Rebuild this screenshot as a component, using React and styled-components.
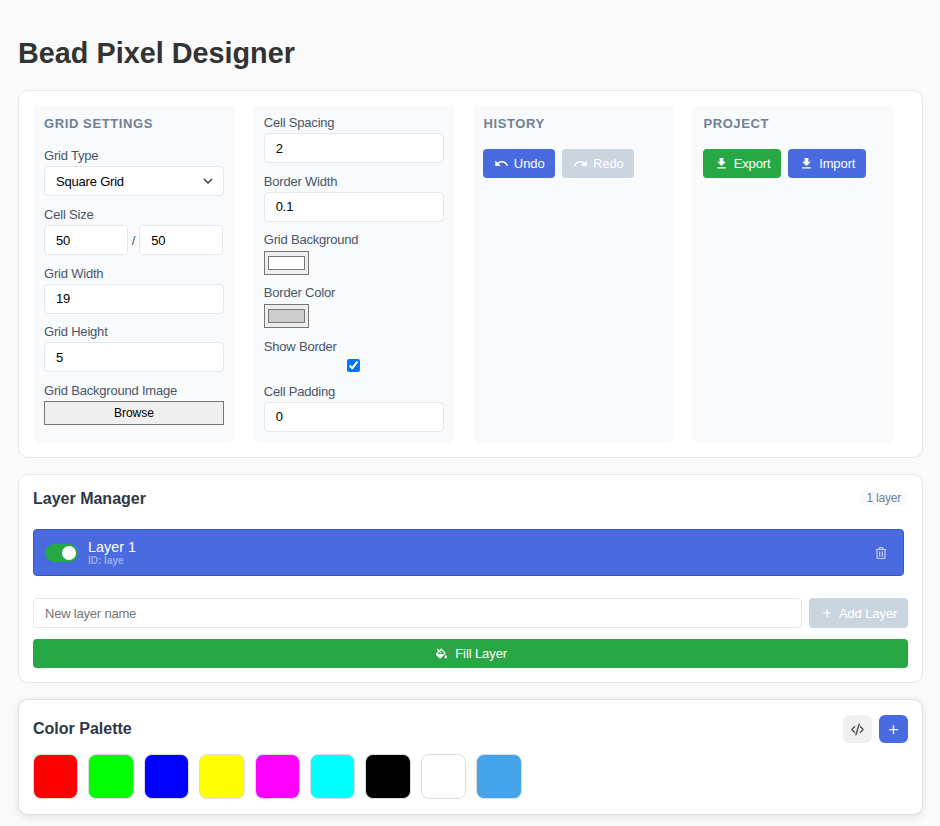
import React from 'react'
import styled, { createGlobalStyle } from 'styled-components'
import { MdUndo, MdRedo, MdFileDownload, MdAdd } from 'react-icons/md'
import { FaFillDrip, FaRegTrashAlt } from 'react-icons/fa'
import { BsCodeSlash } from 'react-icons/bs'

const GlobalStyle = createGlobalStyle`
  * { box-sizing: border-box; }
  body {
    margin: 0;
    background: #fafafa;
    color: #333;
    font-family: "Liberation Sans", Arial, sans-serif;
  }
`

const Page = styled.div`
  padding: 37px 17px 11px 18px;
  display: flex;
  flex-direction: column;
  gap: 16px;
`

const Title = styled.h1`
  margin: 0 0 4px;
  font-size: 28.8px;
  line-height: 33px;
  font-weight: 700;
  color: #333;
`

const Card = styled.section`
  background: #fff;
  border: 1px solid #e2e8f0;
  border-radius: 10px;
  padding: 14px;
`

const PaletteCard = styled(Card)`
  padding: 15px 14px;
  border-color: #e0e0e0;
  box-shadow: 0 2px 8px rgba(0, 0, 0, 0.1);
`

const SettingsGrid = styled.div`
  display: grid;
  grid-template-columns: repeat(4, 201.8px);
  column-gap: 18px;
`

const Panel = styled.div`
  background: #f8fafc;
  border-radius: 6px;
  padding: 10px 11px 0;
  height: 338px;
  display: flex;
  flex-direction: column;
`

const PanelTitle = styled.h3`
  margin: 0 0 15.4px;
  font-size: 13px;
  line-height: 18px;
  font-weight: 700;
  letter-spacing: 0.6px;
  text-transform: uppercase;
  color: #718096;
`

const Field = styled.div`
  display: flex;
  flex-direction: column;
  margin-bottom: 10.67px;
`

const Label = styled.label`
  font-size: 13px;
  letter-spacing: -0.2px;
  line-height: 16px;
  margin-bottom: 2px;
  color: #4a5568;
`

const TextInput = styled.input`
  width: 100%;
  height: 30px;
  padding: 0 11px;
  border: 1px solid #e2e8f0;
  border-radius: 4px;
  background: #fff;
  color: #000;
  font-family: inherit;
  font-size: 13px;
  letter-spacing: -0.2px;
  outline: none;
  &::placeholder { color: #757575; }
`

const Select = styled.select`
  width: 100%;
  height: 30px;
  padding: 0 11px;
  border: 1px solid #e2e8f0;
  border-radius: 4px;
  appearance: none;
  background: #fff url("data:image/svg+xml,%3Csvg xmlns='http://www.w3.org/2000/svg' width='10' height='6'%3E%3Cpath d='M1 1l4 4 4-4' fill='none' stroke='%23333' stroke-width='1.4'/%3E%3C/svg%3E") no-repeat right 10px center;
  color: #000;
  font-family: inherit;
  font-size: 13px;
  letter-spacing: -0.2px;
`

const SizeRow = styled.div`
  display: flex;
  align-items: center;
  gap: 4px;
  width: 179px;
  font-size: 13px;
  color: #4a5568;
`

const ColorInput = styled.input`
  display: block;
  width: 45px;
  height: 24px;
  margin-top: 0.5px;
  padding: 4px 3px;
  border: 1px solid #767676;
  background: #efefef;
  &::-webkit-color-swatch-wrapper { padding: 0; }
`

const Check = styled.input`
  display: block;
  width: 13px;
  height: 13px;
  margin: 2.33px auto 1px;
`

const BrowseButton = styled.button`
  width: 100%;
  height: 24px;
  padding: 0;
  background: #efefef;
  border: 1px solid #767676;
  border-radius: 0;
  color: #000;
  font-family: inherit;
  font-size: 12px;
`

const ButtonRow = styled.div`
  display: flex;
  gap: 7px;
  margin: 0.6px 0 0 -0.5px;
`

const ActionButton = styled.button`
  display: inline-flex;
  align-items: center;
  justify-content: center;
  gap: 5px;
  height: 29px;
  padding: 0 10.75px;
  border: none;
  border-radius: 4px;
  color: #fff;
  background: ${(p) =>
    p.$variant === 'green'
      ? '#28a745'
      : p.$variant === 'muted'
        ? '#cbd5e0'
        : '#4a6be0'};
  font-family: inherit;
  font-size: 13px;
  letter-spacing: -0.1px;
  white-space: nowrap;
`

const CardHeader = styled.div`
  display: flex;
  align-items: center;
  justify-content: space-between;
  height: ${(p) => p.$height}px;
  margin-bottom: ${(p) => p.$gap}px;
`

const CardTitle = styled.h2`
  margin: 0;
  font-size: 16px;
  font-weight: 700;
  color: #2d3748;
`

const Badge = styled.span`
  padding: 0 7px;
  height: 15px;
  line-height: 15px;
  font-size: 12px;
  letter-spacing: -0.2px;
  color: #718096;
  background: #f8fafc;
  border-radius: 8px;
`

const LayerRow = styled.div`
  width: 871px;
  height: 47px;
  display: flex;
  align-items: center;
  padding: 0 16px 0 11px;
  background: #4a6be0;
  border: 1px solid #3a56b8;
  border-radius: 4px;
  margin-bottom: 22px;
`

const Toggle = styled.span`
  position: relative;
  display: block;
  flex: none;
  width: 33px;
  height: 18px;
  margin-right: 10px;
  border-radius: 9px;
  background: #28a745;
  &::after {
    content: '';
    position: absolute;
    top: 2px;
    right: 2px;
    width: 14px;
    height: 14px;
    border-radius: 50%;
    background: #fff;
  }
`

const LayerInfo = styled.div`
  flex: 1;
  display: flex;
  flex-direction: column;
`

const LayerName = styled.span`
  font-size: 14.4px;
  line-height: 16px;
  color: #fff;
`

const LayerId = styled.span`
  font-size: 10px;
  line-height: 12px;
  font-weight: 700;
  color: rgba(255, 255, 255, 0.45);
`

const TrashIcon = styled(FaRegTrashAlt)`
  font-size: 12px;
  color: rgba(255, 255, 255, 0.7);
`

const AddRow = styled.div`
  display: flex;
  gap: 7px;
  margin-bottom: 11px;
`

const AddButton = styled(ActionButton)`
  flex: none;
  width: 99px;
  height: 30px;
`

const FillButton = styled(ActionButton)`
  width: 100%;
  gap: 8px;
  padding-left: 13px;
`

const IconButtons = styled.div`
  display: flex;
  gap: 7px;
`

const IconButton = styled.button`
  display: flex;
  align-items: center;
  justify-content: center;
  width: 29px;
  height: 28px;
  padding: 0;
  border: none;
  border-radius: 6px;
  color: ${(p) => (p.$primary ? '#fff' : '#333')};
  background: ${(p) => (p.$primary ? '#4a6be0' : '#f0f0f0')};
`

const Swatches = styled.div`
  display: flex;
  gap: 10px;
`

const Swatch = styled.div`
  width: 45.4px;
  height: 45.4px;
  border: 1px solid #ddd;
  border-radius: 8px;
  background: ${(p) => p.$color};
`

const palette = ['#ff0000', '#00ff00', '#0000ff', '#ffff00', '#ff00ff', '#00ffff', '#000000', '#ffffff', '#45a3ec']

const App = () => {
  return (
    <Page>
      <GlobalStyle />
      <Title>Bead Pixel Designer</Title>

      <Card>
        <SettingsGrid>
          <Panel>
            <PanelTitle>Grid Settings</PanelTitle>
            <Field>
              <Label>Grid Type</Label>
              <Select defaultValue='square'>
                <option value='square'>Square Grid</option>
              </Select>
            </Field>
            <Field>
              <Label>Cell Size</Label>
              <SizeRow>
                <TextInput defaultValue='50' />
                /
                <TextInput defaultValue='50' />
              </SizeRow>
            </Field>
            <Field>
              <Label>Grid Width</Label>
              <TextInput defaultValue='19' />
            </Field>
            <Field>
              <Label>Grid Height</Label>
              <TextInput defaultValue='5' />
            </Field>
            <Field>
              <Label>Grid Background Image</Label>
              <BrowseButton>Browse</BrowseButton>
            </Field>
          </Panel>

          <Panel>
            <Field>
              <Label>Cell Spacing</Label>
              <TextInput defaultValue='2' />
            </Field>
            <Field>
              <Label>Border Width</Label>
              <TextInput defaultValue='0.1' />
            </Field>
            <Field>
              <Label>Grid Background</Label>
              <ColorInput type='color' defaultValue='#ffffff' />
            </Field>
            <Field>
              <Label>Border Color</Label>
              <ColorInput type='color' defaultValue='#cccccc' />
            </Field>
            <Field>
              <Label>Show Border</Label>
              <Check type='checkbox' defaultChecked />
            </Field>
            <Field>
              <Label>Cell Padding</Label>
              <TextInput defaultValue='0' />
            </Field>
          </Panel>

          <Panel>
            <PanelTitle>History</PanelTitle>
            <ButtonRow>
              <ActionButton><MdUndo size={15} />Undo</ActionButton>
              <ActionButton $variant='muted'><MdRedo size={15} />Redo</ActionButton>
            </ButtonRow>
          </Panel>

          <Panel>
            <PanelTitle>Project</PanelTitle>
            <ButtonRow>
              <ActionButton $variant='green'><MdFileDownload size={15} />Export</ActionButton>
              <ActionButton><MdFileDownload size={15} />Import</ActionButton>
            </ButtonRow>
          </Panel>
        </SettingsGrid>
      </Card>

      <Card>
        <CardHeader $height={19} $gap={21}>
          <CardTitle>Layer Manager</CardTitle>
          <Badge>1 layer</Badge>
        </CardHeader>
        <LayerRow>
          <Toggle />
          <LayerInfo>
            <LayerName>Layer 1</LayerName>
            <LayerId>ID: laye</LayerId>
          </LayerInfo>
          <TrashIcon />
        </LayerRow>
        <AddRow>
          <TextInput placeholder='New layer name' />
          <AddButton $variant='muted'><MdAdd size={16} />Add Layer</AddButton>
        </AddRow>
        <FillButton $variant='green'><FaFillDrip size={11} />Fill Layer</FillButton>
      </Card>

      <PaletteCard>
        <CardHeader $height={28} $gap={11}>
          <CardTitle>Color Palette</CardTitle>
          <IconButtons>
            <IconButton><BsCodeSlash size={13} stroke='currentColor' strokeWidth={0.5} /></IconButton>
            <IconButton $primary><MdAdd size={15} /></IconButton>
          </IconButtons>
        </CardHeader>
        <Swatches>
          {palette.map((c) => (
            <Swatch key={c} $color={c} />
          ))}
        </Swatches>
      </PaletteCard>
    </Page>
  )
}

export default App
